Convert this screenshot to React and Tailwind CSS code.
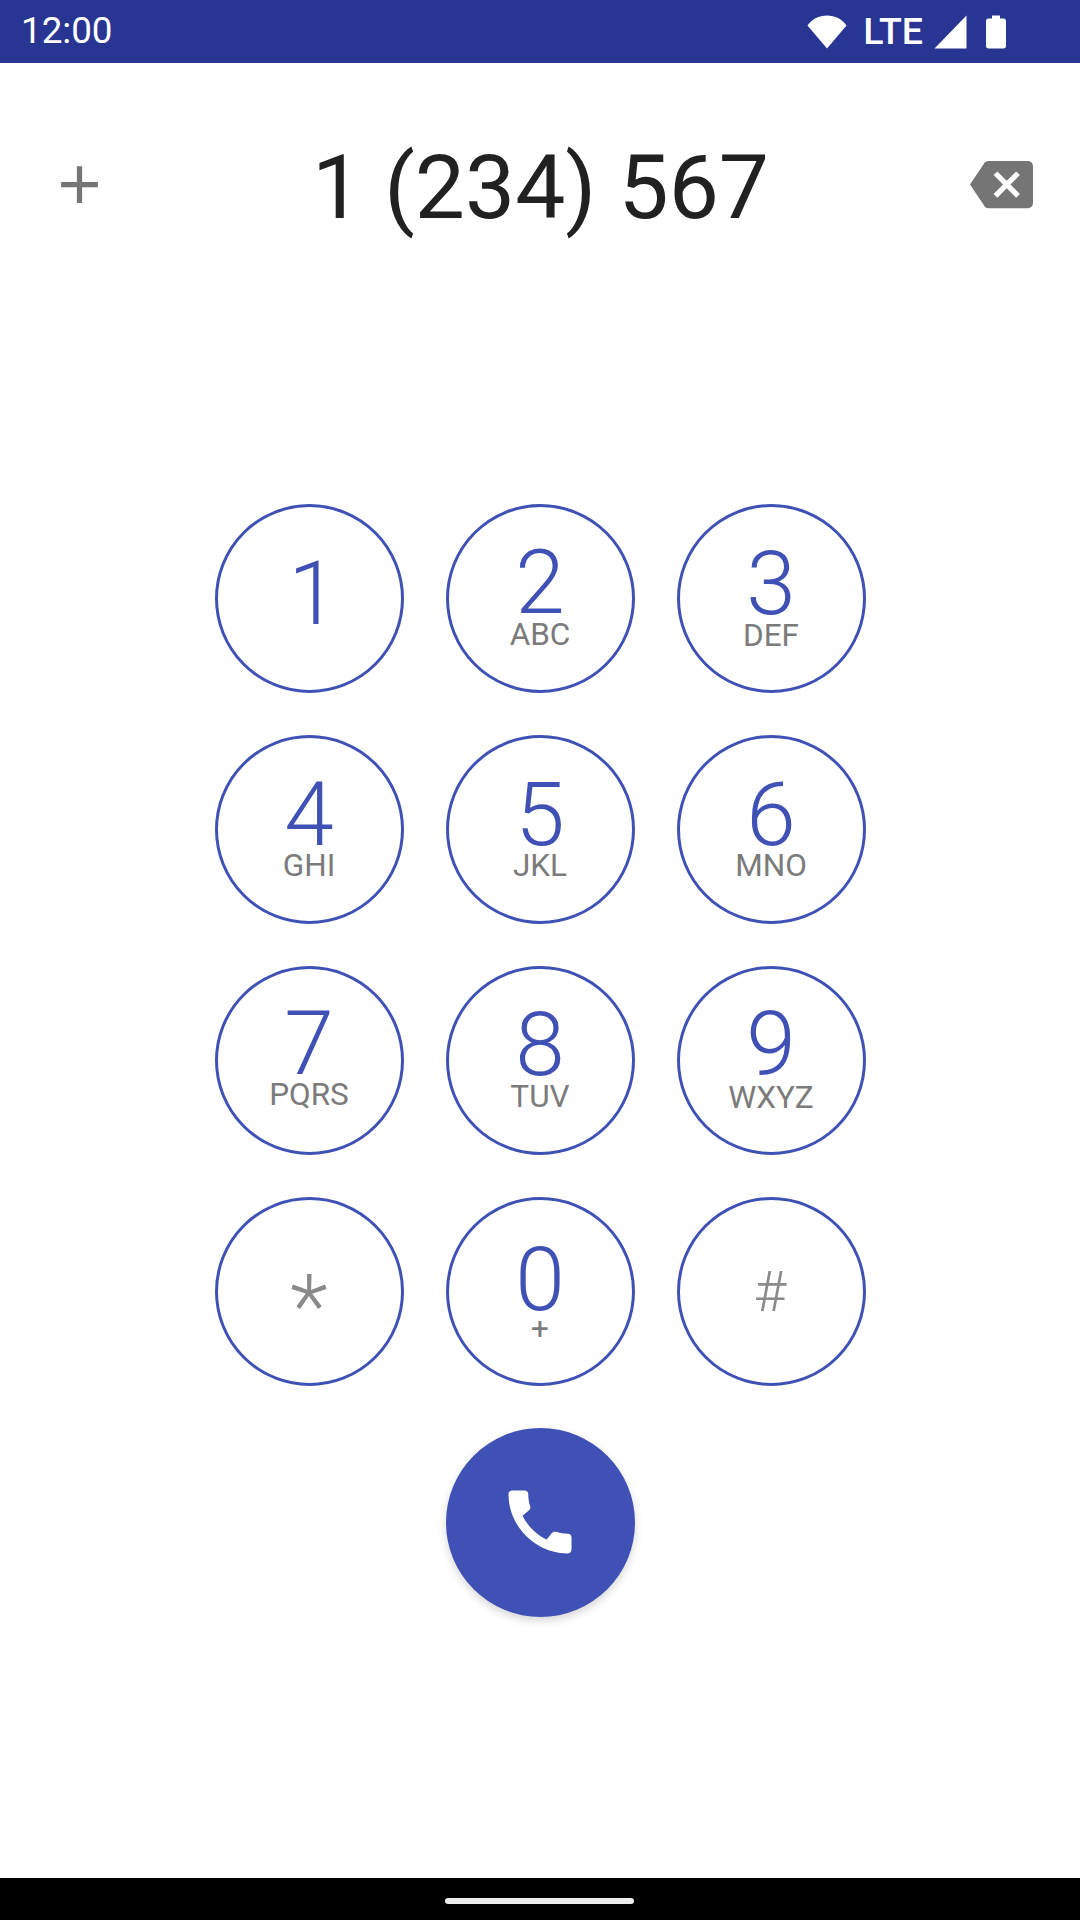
// dialer screen: status bar, typed number, 3x4 keypad, call button, nav bar

const KEYS = [
  { digit: "1", top: "pt-[52px] pl-[8px]" },
  { digit: "2", letters: "ABC", top: "pt-[41px]", gap: "mt-[1px]" },
  { digit: "3", letters: "DEF", top: "pt-[42px]", gap: "mt-[1px]" },
  { digit: "4", letters: "GHI", top: "pt-[42px]", gap: "mt-0" },
  { digit: "5", letters: "JKL", top: "pt-[42px]", gap: "mt-0" },
  { digit: "6", letters: "MNO", top: "pt-[42px]", gap: "mt-0" },
  { digit: "7", letters: "PQRS", top: "pt-[40px]", gap: "mt-0" },
  { digit: "8", letters: "TUV", top: "pt-[41px]", gap: "mt-[1px]" },
  { digit: "9", letters: "WXYZ", top: "pt-[41px]", gap: "mt-[2px]" },
  { symbol: "*", size: "text-[88px]", top: "pt-[62px]" },
  { digit: "0", letters: "+", top: "pt-[45px]", gap: "mt-[-2px]" },
  { symbol: "#", size: "mr-[2px] text-[56px]", top: "pt-[64px]" },
];

function Key({ k }) {
  return (
    <button className={`flex h-[189px] w-[189px] flex-col items-center rounded-full border-[3px] border-[#3f51b5] ${k.top}`}>
      {k.digit && <span className="text-[89.25px] leading-[70px] font-light text-[#3f51b5]">{k.digit}</span>}
      {k.letters && <span className={`text-[31.5px] leading-[32px] text-[#7b7b7b] ${k.gap}`}>{k.letters}</span>}
      {k.symbol && <span className={`leading-none font-light text-[#8a8a8a] ${k.size}`}>{k.symbol}</span>}
    </button>
  );
}

function Icon({ d, className }) {
  return (
    <svg viewBox="0 0 24 24" fill="currentColor" className={className} aria-hidden="true">
      <path d={d} />
    </svg>
  );
}

function StatusBar() {
  return (
    <div className="flex h-[63px] items-center bg-[#283593] pr-[74px] pl-[21px] text-white">
      <span className="text-[36.75px] leading-none">12:00</span>
      <div className="ml-auto flex items-center">
        <svg width="40" height="34" viewBox="0 0 40 34" fill="currentColor" aria-hidden="true">
          <path d="M0.5 10.5 C5 4 12 0.5 20 0.5 C28 0.5 35 4 39.5 10.5 L20 33.5 Z" />
        </svg>
        <span className="ml-[16px] text-[37.5px] leading-none font-medium">LTE</span>
        <svg className="ml-[11px]" width="33" height="34" viewBox="0 0 33 34" fill="currentColor" aria-hidden="true">
          <path d="M32.5 0.5 V33.5 H0.5 Z" />
        </svg>
        <svg className="ml-[19px]" width="20" height="34" viewBox="0 0 20 34" fill="currentColor" aria-hidden="true">
          <path d="M6 0.5 H14 V3.5 H17.5 C19 3.5 20 4.5 20 6 V31 C20 32.5 19 33.5 17.5 33.5 H2.5 C1 33.5 0 32.5 0 31 V6 C0 4.5 1 3.5 2.5 3.5 H6 Z" />
        </svg>
      </div>
    </div>
  );
}

export default function App() {
  return (
    <div className="flex h-[1920px] w-[1080px] flex-col bg-white font-['Roboto',sans-serif]">
      <StatusBar />

      <div className="mt-[90px] flex h-[63px] items-center justify-between pr-[47px] pl-[48px] text-[#757575]">
        <Icon className="h-[63px] w-[63px]" d="M19 13h-6v6h-2v-6H5v-2h6V5h2v6h6v2z" />
        <span className="pt-[6px] text-[89.25px] leading-[63px] text-[#212121]">1 (234) 567</span>
        <Icon
          className="h-[63px] w-[63px]"
          d="M22 3H7c-.69 0-1.23.35-1.59.88L0 12l5.41 8.11c.36.53.9.89 1.59.89h15c1.1 0 2-.9 2-2V5c0-1.1-.9-2-2-2zm-3 12.59L17.59 17 14 13.41 10.41 17 9 15.59 12.59 12 9 8.41 10.41 7 14 10.59 17.59 7 19 8.41 15.41 12 19 15.59z"
        />
      </div>

      <div className="mt-[288px] flex flex-col items-center gap-[42px]">
        <div className="grid grid-cols-3 gap-[42px]">
          {KEYS.map((k) => (
            <Key key={k.digit || k.symbol} k={k} />
          ))}
        </div>
        <button className="flex h-[189px] w-[189px] items-center justify-center rounded-full bg-[#3f51b5] pb-[2px] text-white shadow-[0_4px_8px_rgba(0,0,0,0.16)]">
          <Icon
            className="h-[84px] w-[84px]"
            d="M20.01 15.38c-1.23 0-2.42-.2-3.53-.56-.35-.12-.74-.03-1.01.24l-1.57 1.97c-2.83-1.35-5.48-3.9-6.89-6.83l1.95-1.66c.27-.28.35-.67.24-1.02-.37-1.11-.56-2.3-.56-3.53 0-.54-.45-.99-.99-.99H4.19C3.65 3 3 3.24 3 3.99 3 13.28 10.73 21 20.01 21c.71 0 .99-.63.99-1.18v-3.45c0-.54-.45-.99-.99-.99z"
          />
        </button>
      </div>

      <div className="mt-auto flex h-[42px] items-start justify-center bg-black pt-[20px]">
        <div className="mr-[2px] h-[6px] w-[189px] rounded-full bg-[#ececec]" />
      </div>
    </div>
  );
}
